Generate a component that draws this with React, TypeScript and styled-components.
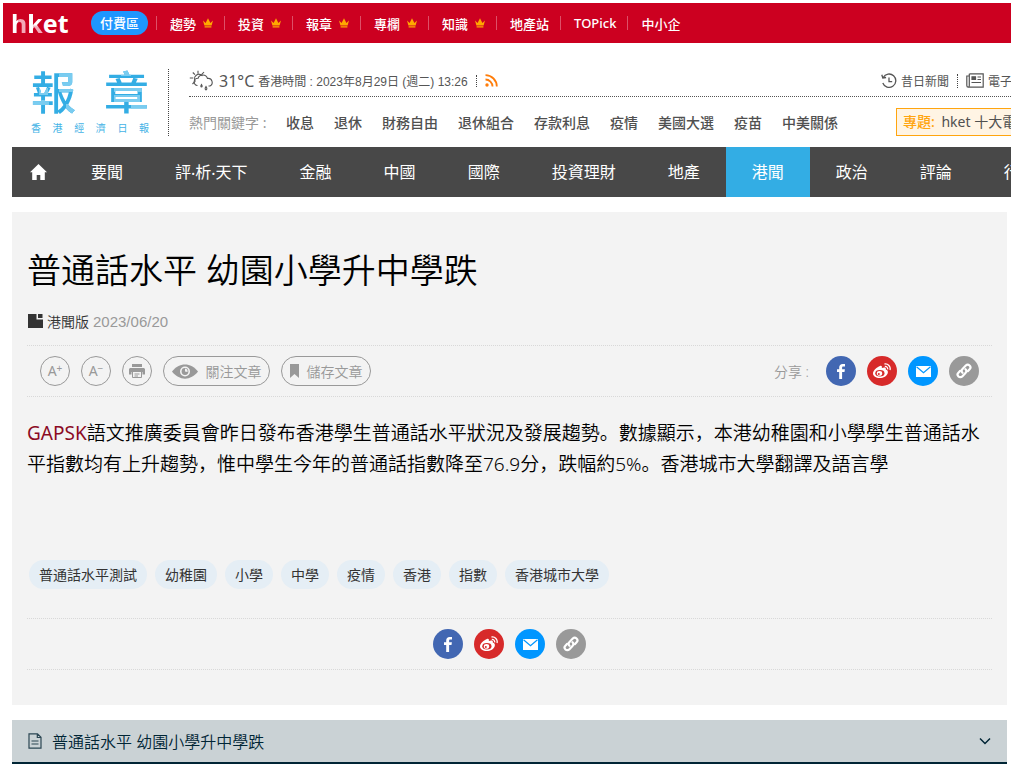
import React from "react";
import styled, { createGlobalStyle, css } from "styled-components";

const ui = '"Noto Sans", "Noto Sans CJK SC", sans-serif';
const arial = '"Liberation Sans", "Noto Sans CJK SC", sans-serif';

const Global = createGlobalStyle`
  * { box-sizing: border-box; }
  body { margin: 0; background: #fff; font-family: ${ui}; color: #444; }
  a { color: inherit; text-decoration: none; }
  button { font: inherit; cursor: pointer; }
  svg { display: block; flex: none; }
`;

const Page = styled.div`
  margin: 3px 6px 0 3px;
  overflow: hidden;
`;

const TopBar = styled.nav`
  display: flex;
  align-items: center;
  height: 40px;
  padding-left: 8px;
  background: #cc0020;
  color: #fff;
  font-size: 13px;
  font-weight: 500;
  white-space: nowrap;
`;

const Brand = styled.a`
  display: flex;
  width: 80px;
  font: 700 25px/40px "Noto Sans", sans-serif;
`;

const BrandLetter = styled.span<{ $fill?: string }>`
  ${(p) =>
    p.$fill &&
    css`
      color: transparent;
      background: ${p.$fill};
      background-clip: text;
      -webkit-background-clip: text;
    `}
`;

const PaidPill = styled.a`
  height: 24px;
  padding: 0 9px;
  margin-right: 8px;
  border-radius: 12px;
  background: #1e96ff;
  line-height: 24px;
`;

const TopItem = styled.a`
  display: flex;
  align-items: center;
  gap: 7px;
  height: 14px;
  padding: 0 11px 0 13px;
  border-left: 1px solid #dd5068;
`;

const Masthead = styled.header`
  display: flex;
  height: 104px;
  padding-left: 28px;
`;

const PaperLogo = styled.a`
  display: flex;
  flex-direction: column;
  gap: 2px;
  flex: none;
  width: 118px;
  padding-top: 23px;
`;

const LogoRow = styled.span<{ $small?: boolean }>`
  display: flex;
  justify-content: space-between;
  color: #43b3e6;
  font-weight: ${(p) => (p.$small ? 400 : 500)};
  font-size: ${(p) => (p.$small ? 10 : 45)}px;
  line-height: ${(p) => (p.$small ? 14 : 53)}px;
`;

const tint = "linear-gradient(#7accf0, #7accf0)";

const LogoGlyph = styled.span<{ $tints: string[] }>`
  color: transparent;
  background: ${(p) => p.$tints.map((t) => `${tint} ${t} no-repeat`).join(", ")}, #33ade4;
  background-clip: text;
  -webkit-background-clip: text;
`;

const VRule = styled.span<{ $h: number; $gap: string }>`
  flex: none;
  height: ${(p) => p.$h}px;
  margin: ${(p) => p.$gap};
  border-left: 1px dotted #444;
`;

const HeadInfo = styled.div`
  flex: 1;
  min-width: 0;
  padding-top: 22px;
`;

const InfoRow = styled.div`
  display: flex;
  align-items: center;
  height: 32px;
  border-bottom: 1px dotted #555;
  font: 12px ${arial};
  white-space: nowrap;
  color: #555;
`;

const Temp = styled.span`
  margin: 0 4px 0 5px;
  font: 16px ${ui};
`;

const Tools = styled.div`
  display: flex;
  align-items: center;
  flex: none;
  width: 130px;
  margin-left: auto;
  overflow: hidden;
`;

const Tool = styled.a`
  display: flex;
  align-items: center;
  flex: none;
  gap: 4px;
`;

const KeyRow = styled.div`
  display: flex;
  align-items: center;
  gap: 20px;
  padding-top: 11px;
  color: #505050;
  font-size: 14px;
  white-space: nowrap;
`;

const KeyLabel = styled.span`
  width: 77px;
  color: #999;
`;

const Keyword = styled.a`
  font-weight: 500;
`;

const Special = styled.a`
  flex: none;
  width: 115px;
  height: 28px;
  margin-left: auto;
  padding-left: 6px;
  border: 1px solid #ffa50f;
  border-right: 0;
  background: #fff4e4;
  line-height: 26px;
  overflow: hidden;
`;

const SpecialTag = styled.strong`
  margin-right: 3px;
  color: #ffa50f;
  font-weight: 500;
`;

const MainNav = styled.nav`
  display: flex;
  margin-left: 9px;
  background: #484848;
  color: #fff;
  font-size: 16px;
  line-height: 50px;
  white-space: nowrap;
`;

const NavItem = styled.a<{ $active?: boolean; $icon?: boolean }>`
  display: flex;
  align-items: center;
  flex: none;
  height: 50px;
  padding: 0 ${(p) => (p.$icon ? 18 : 26)}px;
  background: ${(p) => (p.$active ? "#33ade4" : "transparent")};
`;

const Content = styled.main`
  margin: 15px 4px 0 9px;
`;

const Article = styled.article`
  padding: 31px 15px 35px;
  background: #f3f3f3;
`;

const Title = styled.h1`
  margin: 0;
  color: #000;
  font-size: 34px;
  line-height: 54px;
  font-weight: 350;
`;

const Meta = styled.div`
  display: flex;
  align-items: center;
  gap: 4px;
  height: 22px;
  margin: 13px 0 13px 1px;
  color: #333;
  font: 14px ${arial};
`;

const Edition = styled.a`
  font-weight: 350;
`;

const MetaDate = styled.time`
  color: #999;
  font-size: 15px;
`;

const Bar = styled.div<{ $center?: boolean }>`
  display: flex;
  align-items: center;
  justify-content: ${(p) => (p.$center ? "center" : "flex-start")};
  gap: 11px;
  height: 52px;
  padding: 0 13px;
  border: 1px dotted #d8d8d8;
  border-width: 1px 0;
  color: #999;
  font-size: 14px;
  font-weight: 350;
`;

const ToolButton = styled.button<{ $w?: number }>`
  display: flex;
  align-items: center;
  justify-content: center;
  gap: ${(p) => (p.$w ? 8 : 1)}px;
  width: ${(p) => p.$w || 30}px;
  height: 30px;
  padding: 0;
  border: 1px solid #999;
  border-radius: 15px;
  background: none;
  color: #999;
  white-space: nowrap;
`;

const Letter = styled.span`
  display: flex;
  font: 14px/20px "Noto Sans", sans-serif;
`;

const Sign = styled.span`
  font-size: 10px;
  line-height: 14px;
`;

const ShareLabel = styled.span`
  margin: 0 6px 0 auto;
`;

const ShareLink = styled.a<{ $color: string }>`
  display: flex;
  align-items: center;
  justify-content: center;
  width: 30px;
  height: 30px;
  border-radius: 50%;
  background: ${(p) => p.$color};
`;

const Story = styled.p`
  margin: 21px 0 0;
  min-height: 142px;
  color: #000;
  font-size: 19px;
  line-height: 31px;
  font-weight: 350;
`;

const StoryLink = styled.a`
  color: #8b0a24;
  font-weight: 400;
`;

const Tags = styled.div`
  display: flex;
  flex-wrap: wrap;
  gap: 8px;
  margin: 0 0 29px 2px;
`;

const Tag = styled.a`
  padding: 0 10px;
  border-radius: 15px;
  background: #e5eef5;
  color: #333;
  font-size: 14px;
  line-height: 29px;
`;

const Drawer = styled.button`
  display: flex;
  align-items: center;
  width: 100%;
  height: 44px;
  margin-top: 15px;
  padding: 0 16px;
  border: 0;
  border-bottom: 2px solid #002535;
  background: #cad2d5;
  color: #002535;
  font-size: 16px;
  font-weight: 350;
`;

const DrawerText = styled.span`
  flex: 1;
  margin-left: 10px;
  text-align: left;
`;

const Crown = () => (
  <svg width="10" height="10" viewBox="0 0 10 10" fill="#ffa800">
    <path d="M0 2.5 2.6 5 5 .3 7.400 5 10 2.500 8.600 7.500H1.400ZM1.600 8.200H8.400V9.500H1.600Z" />
  </svg>
);

const Weather = () => (
  <svg width="25" height="22" viewBox="0 0 25 22" fill="none" stroke="#555" strokeWidth="1.100">
    <path d="M6.500 11.500a4.300 4.300 0 1 1 7-5.500M9 .8v3M3.800 2.500l2.200 2.200M.8 8h3.500M15 2l-2.200 2.400M3.500 14l2.300-2.300" />
    <path d="M8.500 15.500a3.600 3.600 0 0 1 .5-7.200 5 5 0 0 1 9.500.2 4 4 0 0 1 2.500 7.500h-1.500" />
    <path d="M12.500 14.500c-2.300 3.200 2.300 3.200 0 0ZM17 16.500c-3 4.500 3 4.500 0 0Z" />
  </svg>
);

const Rss = () => (
  <svg width="13" height="13" viewBox="0 0 13 13" fill="none" stroke="#ff7d0a" strokeWidth="1.800">
    <circle cx="2" cy="11" r="1.700" fill="#ff7d0a" stroke="none" />
    <path d="M.5 5.500a7 7 0 0 1 7 7M.5 1.200a11.300 11.300 0 0 1 11.300 11.300" />
  </svg>
);

const History = () => (
  <svg width="16" height="16" viewBox="0 0 16 16" fill="none" stroke="#555" strokeWidth="1.300">
    <path d="M2.200 4.500A6.700 6.700 0 1 1 1.800 10M.8 1.800l1 3.200 3.300-.5M8 4.500v4.200h3.200" />
  </svg>
);

const Paper = () => (
  <svg width="18" height="15" viewBox="0 0 18 15" fill="none" stroke="#555" strokeWidth="1.200">
    <path d="M3.500.8h13.700v13.400H2.200C1 14.200.8 13.500.8 12.500V3h2.500M3.300.8v11.700c0 1-.4 1.600-1 1.700M11.500 4h3.500M11.500 6.500h3.500M5.500 9.500h9.500" />
    <path d="M6 3.800h3.500v2.500H6z" fill="#555" />
  </svg>
);

const Home = () => (
  <svg width="17" height="16" viewBox="0 0 17 16" fill="#fff">
    <path d="M8.500 0 17 8.300h-2.200V16h-4.500v-5H6.700v5H2.200V8.300H0Z" />
  </svg>
);

const EditionIcon = () => (
  <svg width="15" height="14" viewBox="0 0 15 14" fill="#333">
    <path d="M0 0h8.500v5.500H15V14H0ZM10 0h4.500v4H10Z" />
  </svg>
);

const Printer = () => (
  <svg width="16" height="14" viewBox="0 0 16 14" fill="#999">
    <path d="M3 0h10v3H3ZM1 4h14l1 1v5.500h-2.500V8h-11v2.500H0V5Z" />
    <path d="M3.500 8v5.500h9V8M5.500 10h5M5.500 12h3.500" fill="none" stroke="#999" />
  </svg>
);

const Eye = () => (
  <svg width="26" height="15" viewBox="0 0 26 15">
    <path d="M0 7.500C7-2 19-2 26 7.500 19 17 7 17 0 7.500Z" fill="#999" />
    <circle cx="13" cy="7.500" r="5" fill="#f3f3f3" />
    <circle cx="13" cy="7.500" r="3.400" fill="#999" />
    <path d="M13 7.500V4.500a3 3 0 0 1 2.500 3.500Z" fill="#f3f3f3" />
  </svg>
);

const Bookmark = () => (
  <svg width="9" height="14" viewBox="0 0 9 14" fill="#999">
    <path d="M0 0h9v14L4.500 10 0 14Z" />
  </svg>
);

const Facebook = () => (
  <svg width="8" height="15" viewBox="0 0 8 15" fill="#fff">
    <path d="M2.200 15V8H0V5.300h2.200V3.500C2.200 1.200 3.500 0 5.600 0L8 .1v2.400H6.300C5.400 2.500 5.100 3 5.100 3.700v1.600h2.800L7.500 8H5.100v7Z" />
  </svg>
);

const Weibo = () => (
  <svg width="18" height="16" viewBox="0 0 18 16">
    <path d="M7 3c1.700-.6 2.300.5 1.800 2 2.500-1 4.600-.7 4 1.500 1.700.6 2.400 1.800 2 3.500C14 13 10.500 15 6.800 15 3 15 0 13.200 0 10.500 0 7.500 4 4 7 3Z" fill="#fff" />
    <ellipse cx="6.900" cy="10.200" rx="4.600" ry="3.200" fill="#d72a2a" />
    <ellipse cx="6.500" cy="10.400" rx="2.700" ry="2.300" fill="#fff" />
    <circle cx="5.800" cy="10.900" r="1" fill="#d72a2a" />
    <path d="M11.500 1a4.800 4.800 0 0 1 5.500 6M11.800 3.400a2.500 2.500 0 0 1 2.800 3" fill="none" stroke="#fff" strokeWidth="1.300" />
  </svg>
);

const Mail = () => (
  <svg width="15" height="11" viewBox="0 0 15 11">
    <path d="M0 0h15v11H0Z" fill="#fff" />
    <path d="M.5.800 7.500 6.800 14.500.8" fill="none" stroke="#0096ff" strokeWidth="1.200" />
  </svg>
);

const Chain = () => (
  <svg width="16" height="16" viewBox="0 0 16 16" fill="none" stroke="#fff" strokeWidth="2.200" strokeLinecap="round">
    <path d="M6.500 9.800a2.700 2.700 0 0 1 0-3.800l3.300-3.400a2.600 2.600 0 0 1 3.800 3.700L11.800 8.200" />
    <path d="M9.500 6.200a2.700 2.700 0 0 1 0 3.800l-3.300 3.400a2.600 2.600 0 0 1-3.800-3.700L4.200 7.800" />
  </svg>
);

const DocIcon = () => (
  <svg width="14" height="16" viewBox="0 0 14 16" fill="none" stroke="#2a4653" strokeWidth="1.200">
    <path d="M1 .8h8.500L13 4.300V15.200H1ZM9.300.8v3.700H13M3.500 8h7M3.500 11h7" />
  </svg>
);

const Chevron = () => (
  <svg width="12" height="8" viewBox="0 0 12 8" fill="none" stroke="#002535" strokeWidth="1.500">
    <path d="m1 1.500 5 5 5-5" />
  </svg>
);

const ShareLinks = () => (
  <>
    <ShareLink href="#facebook" aria-label="Facebook" $color="#4267b2"><Facebook /></ShareLink>
    <ShareLink href="#weibo" aria-label="Weibo" $color="#d72a2a"><Weibo /></ShareLink>
    <ShareLink href="#mail" aria-label="Email" $color="#0096ff"><Mail /></ShareLink>
    <ShareLink href="#link" aria-label="Link" $color="#999"><Chain /></ShareLink>
  </>
);

const topItems: [string, boolean][] = [
  ["趨勢", true], ["投資", true], ["報章", true], ["專欄", true], ["知識", true],
  ["地產站", false], ["TOPick", false], ["中小企", false],
];
const keywords = ["收息", "退休", "財務自由", "退休組合", "存款利息", "疫情", "美國大選", "疫苗", "中美關係"];
const sections = ["要聞", "評‧析‧天下", "金融", "中國", "國際", "投資理財", "地產", "港聞", "政治", "評論", "行政"];
const tags = ["普通話水平測試", "幼稚園", "小學", "中學", "疫情", "香港", "指數", "香港城市大學"];

export default function App() {
  return (
    <Page>
      <Global />
      <TopBar>
        <Brand href="#home">
          <BrandLetter $fill="linear-gradient(90deg, #fff 42%, #f4a8b8 42%)">h</BrandLetter>
          <BrandLetter $fill="linear-gradient(90deg, #fff 38%, transparent 38%), linear-gradient(0deg, #f4a8b8 40%, #fff 46%)">k</BrandLetter>
          <BrandLetter>et</BrandLetter>
        </Brand>
        <PaidPill href="#paid">付費區</PaidPill>
        {topItems.map(([name, crown]) => (
          <TopItem href="#top" key={name}>
            {name}
            {crown && <Crown />}
          </TopItem>
        ))}
      </TopBar>
      <Masthead>
        <PaperLogo href="#paper">
          <LogoRow>
            <LogoGlyph $tints={["28px 0 / 17px 26px", "0 34px / 18px 5px", "8px 22px / 9px 7px", "35px 38px / 10px 15px"]}>報</LogoGlyph>
            <LogoGlyph $tints={["17px 4px / 10px 6px", "10px 20px / 35px 6px", "10px 29px / 26px 7px", "27px 38px / 18px 6px"]}>章</LogoGlyph>
          </LogoRow>
          <LogoRow $small>
            {[..."香港經濟日報"].map((c) => <span key={c}>{c}</span>)}
          </LogoRow>
        </PaperLogo>
        <VRule $h={67} $gap="26px 20px 0 19px" />
        <HeadInfo>
          <InfoRow>
            <Weather />
            <Temp>31°C</Temp>
            <span>香港時間 : 2023年8月29日 (週二) 13:26</span>
            <VRule $h={12} $gap="0 8px" />
            <a href="#rss" aria-label="RSS"><Rss /></a>
            <Tools>
              <Tool href="#archive"><History />昔日新聞</Tool>
              <VRule $h={14} $gap="0 8px" />
              <Tool href="#epaper"><Paper />電子報</Tool>
            </Tools>
          </InfoRow>
          <KeyRow>
            <KeyLabel>熱門關鍵字 :</KeyLabel>
            {keywords.map((k) => <Keyword href="#key" key={k}>{k}</Keyword>)}
            <Special href="#special"><SpecialTag>專題:</SpecialTag> hket 十大電視</Special>
          </KeyRow>
        </HeadInfo>
      </Masthead>
      <MainNav>
        <NavItem href="#home" aria-label="Home" $icon><Home /></NavItem>
        {sections.map((s) => (
          <NavItem href="#section" key={s} $active={s === "港聞"}>{s}</NavItem>
        ))}
      </MainNav>
      <Content>
        <Article>
          <Title>普通話水平 幼園小學升中學跌</Title>
          <Meta>
            <EditionIcon />
            <Edition href="#edition">港聞版</Edition>
            <MetaDate>2023/06/20</MetaDate>
          </Meta>
          <Bar>
            <ToolButton><Letter>A<Sign>+</Sign></Letter></ToolButton>
            <ToolButton><Letter>A<Sign>−</Sign></Letter></ToolButton>
            <ToolButton aria-label="Print"><Printer /></ToolButton>
            <ToolButton $w={107}><Eye />關注文章</ToolButton>
            <ToolButton $w={90}><Bookmark />儲存文章</ToolButton>
            <ShareLabel>分享 :</ShareLabel>
            <ShareLinks />
          </Bar>
          <Story>
            <StoryLink href="#gapsk">GAPSK</StoryLink>
            語文推廣委員會昨日發布香港學生普通話水平狀況及發展趨勢。數據顯示，本港幼稚園和小學學生普通話水平指數均有上升趨勢，惟中學生今年的普通話指數降至76.9分，跌幅約5%。香港城市大學翻譯及語言學
          </Story>
          <Tags>
            {tags.map((t) => <Tag href="#tag" key={t}>{t}</Tag>)}
          </Tags>
          <Bar $center><ShareLinks /></Bar>
        </Article>
        <Drawer>
          <DocIcon />
          <DrawerText>普通話水平 幼園小學升中學跌</DrawerText>
          <Chevron />
        </Drawer>
      </Content>
    </Page>
  );
}
